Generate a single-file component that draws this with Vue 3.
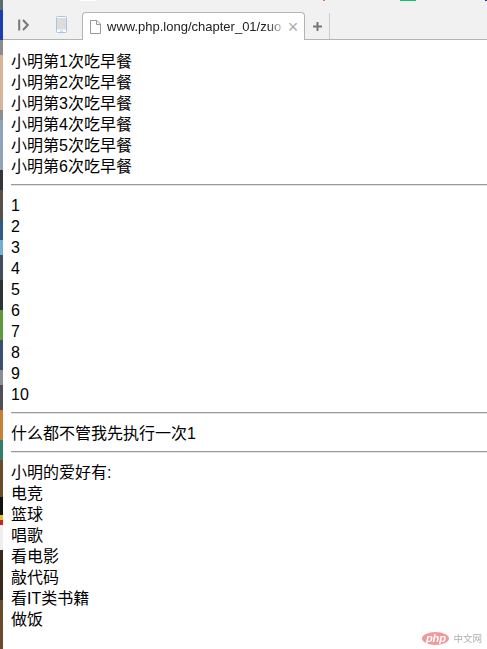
<template>
  <div class="window">
    <div class="wallpaper"></div>
    <div class="browser">
      <div class="topline">
        <span class="mark white"></span>
        <span class="mark orange"></span>
        <span class="mark green"></span>
        <span class="mark blue"></span>
      </div>
      <div class="tabbar">
        <div class="tool-btn back-btn">
          <svg width="12" height="12" viewBox="0 0 12 12">
            <path d="M1.200 0.500v11" stroke="#777" stroke-width="2" fill="none" />
            <path d="M5 1 9.800 6 5 11" stroke="#777" stroke-width="2" fill="none" />
          </svg>
        </div>
        <div class="tool-btn phone-btn">
          <svg width="11" height="17" viewBox="0 0 11 17">
            <rect x="0.500" y="0.500" width="10" height="16" rx="1" fill="#fff" stroke="#a9c3e4" />
            <rect x="1" y="2" width="9" height="11.500" fill="#dcdcdc" />
            <rect x="4" y="14.500" width="3" height="1" fill="#a9c3e4" />
          </svg>
        </div>
        <div class="tab">
          <svg class="file-icon" width="11" height="14" viewBox="0 0 11 14">
            <path d="M.5.5h6.500l3.500 3.500v9.500h-10z" fill="#fff" stroke="#999" />
            <path d="M6.500.5v4h4" fill="none" stroke="#999" />
          </svg>
          <span class="tab-title">www.php.long/chapter_01/zuo</span>
          <span class="tab-close">×</span>
        </div>
        <div class="new-tab">
          <svg width="11" height="11" viewBox="0 0 11 11">
            <path d="M5.500 1v9M1 5.500h9" stroke="#777" stroke-width="2" />
          </svg>
        </div>
      </div>
      <div class="page">
        <div v-for="n in 6" :key="n">小明第{{ n }}次吃早餐</div>
        <hr />
        <div v-for="n in 10" :key="'num' + n">{{ n }}</div>
        <hr />
        <div>什么都不管我先执行一次1</div>
        <hr />
        <div>小明的爱好有:</div>
        <div v-for="item in hobbies" :key="item">{{ item }}</div>
      </div>
      <div class="watermark">
        <span class="php-logo">php</span>
        <span class="php-cn">中文网</span>
      </div>
    </div>
  </div>
</template>

<script setup>
const hobbies = ['电竞', '篮球', '唱歌', '看电影', '敲代码', '看IT类书籍', '做饭']
</script>

<style>
html,
body {
  margin: 0;
  background: #fff;
}
</style>

<style scoped>
.window {
  display: flex;
  width: 487px;
  height: 649px;
  overflow: hidden;
}

/* desktop wallpaper showing down the left side of the window */
.wallpaper {
  width: 3px;
  flex: none;
  background: linear-gradient(
    to bottom,
    #5f6a70 0 10px,
    #1a3fb5 10px 40px,
    #8c8c8c 40px 55px,
    #d8b596 55px 110px,
    #8a8f94 110px 120px,
    #8fa3b8 120px 170px,
    #33363a 170px 190px,
    #5a5048 190px 220px,
    #2b5c8c 220px 240px,
    #6fb0d8 240px 255px,
    #3d4f60 255px 280px,
    #2d3438 280px 310px,
    #5d9a3c 310px 340px,
    #3a5070 340px 370px,
    #8a8f94 370px 385px,
    #4d5055 385px 410px,
    #c9802f 410px 440px,
    #2f7f6a 440px 460px,
    #6b4a2a 460px 497px,
    #111 497px 515px,
    #e8c020 515px 520px,
    #d02020 520px 525px,
    #eee 525px 550px,
    #3a2a1a 550px 600px,
    #6b4a2a 600px 649px
  );
}

.browser {
  position: relative;
  flex: 1;
  min-width: 0;
  background: #fff;
}

.topline {
  display: flex;
  height: 1px;
  background: #f1f1f1;
}

.mark {
  height: 1px;
  flex: none;
}

.white {
  width: 16px;
  margin-left: 77px;
  background: #fff;
}

.orange {
  width: 2px;
  margin-left: 227px;
  background: #f0763a;
}

.green {
  width: 16px;
  margin-left: 75px;
  background: #12c468;
}

.blue {
  width: 2px;
  margin-left: 69px;
  background: #2233bb;
}

.tabbar {
  display: flex;
  align-items: flex-end;
  height: 39px;
  background: #f1f1f1;
  border-bottom: 1px solid #b4b4b4;
  box-sizing: border-box;
}

.tool-btn {
  display: flex;
  justify-content: center;
  align-items: center;
  height: 28px;
  flex: none;
}

.back-btn {
  width: 42px;
}

.phone-btn {
  width: 32px;
  margin-right: 5px;
  padding-bottom: 2px;
  box-sizing: border-box;
}

.tab {
  display: flex;
  align-items: center;
  width: 223px;
  height: 28px;
  flex: none;
  margin-bottom: -1px;
  padding: 0 4px 0 7px;
  box-sizing: border-box;
  background: #fff;
  border: 1px solid #b4b4b4;
  border-bottom: none;
  border-radius: 4px 4px 0 0;
}

.file-icon {
  flex: none;
  margin-right: 6px;
}

.tab-title {
  flex: 1;
  min-width: 0;
  white-space: nowrap;
  font: 13px "Liberation Sans", Arial, sans-serif;
  color: #222;
  -webkit-mask-image: linear-gradient(to right, #000 90%, transparent);
  mask-image: linear-gradient(to right, #000 90%, transparent);
}

.tab-close {
  flex: none;
  width: 14px;
  text-align: center;
  font: 18px/1 "Liberation Sans", Arial, sans-serif;
  color: #aaa;
}

.new-tab {
  display: flex;
  justify-content: center;
  align-items: center;
  width: 25px;
  height: 26px;
  flex: none;
  box-sizing: border-box;
  border-right: 1px solid #ccc;
}

.page {
  padding: 11px 0 8px 8px;
  font: 16px/21px "Liberation Sans", "Noto Sans CJK SC", sans-serif;
  color: #000;
}

hr {
  margin: 7px 0 9px;
  border: none;
  border-top: 1px solid #999;
  border-bottom: 1px solid #e4e4e4;
}

.watermark {
  position: absolute;
  right: 5px;
  bottom: 4px;
  display: flex;
  align-items: center;
  gap: 4px;
  opacity: 0.8;
}

.php-logo {
  width: 27px;
  height: 13px;
  border-radius: 50%;
  background: #ef7f80;
  color: #fff;
  text-align: center;
  font: italic bold 11px/12px "Liberation Sans", sans-serif;
}

.php-cn {
  font: 9.5px "Noto Sans CJK SC", sans-serif;
  color: #999;
}
</style>
